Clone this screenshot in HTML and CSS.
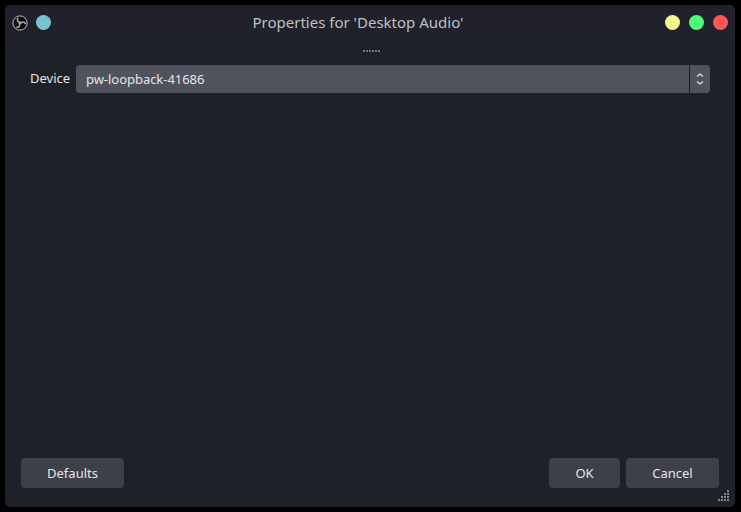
FILE: index.html
```html
<!DOCTYPE html>
<html lang="en">
<head>
<meta charset="utf-8">
<title>Properties for 'Desktop Audio'</title>
<link rel="stylesheet" href="styles.css">
</head>
<body>
<main class="window">
  <header class="titlebar">
    <div class="controls left">
      <svg class="logo" viewBox="0 0 16 16" fill="none">
        <circle cx="8" cy="8" r="7.1" fill="#08080a" stroke="#bcbcbc" stroke-width="1"/>
        <g stroke="#b4b4b0" stroke-width="1.5" stroke-linecap="round">
          <path d="M8.2 7.3C5.8 7 4.700 5.400 5.800 3.200"/>
          <path d="M8.2 7.3C5.8 7 4.700 5.400 5.800 3.200" transform="rotate(120 8 8)"/>
          <path d="M8.2 7.3C5.8 7 4.700 5.400 5.800 3.200" transform="rotate(240 8 8)"/>
        </g>
      </svg>
      <span class="dot blue"></span>
    </div>
    <h1 class="title">Properties for 'Desktop Audio'</h1>
    <div class="controls right">
      <span class="dot yellow"></span>
      <span class="dot green"></span>
      <span class="dot red"></span>
    </div>
  </header>
  <svg class="splitter" viewBox="0 0 18 2"><path d="M0 1h17" stroke="#73757c" stroke-width="2" stroke-dasharray="2 1"/></svg>
  <section class="form">
    <label class="label">Device</label>
    <div class="select">
      <span class="value">pw-loopback-41686</span>
      <span class="arrows">
        <svg width="8" height="14" viewBox="0 0 8 14" fill="none" stroke="#e6e7e9" stroke-width="1.2"><path d="M1 4.500l3-2.500 3 2.500M1 9.500l3 2.500 3-2.500"/></svg>
      </span>
    </div>
  </section>
  <footer class="footer">
    <button class="btn defaults">Defaults</button>
    <button class="btn ok">OK</button>
    <button class="btn cancel">Cancel</button>
  </footer>
  <svg class="grip" viewBox="0 0 11 11" stroke="#85868b" stroke-width="2" stroke-dasharray="2 1"><path d="M9 1h2M6 4h5M3 7h8M0 10h11"/></svg>
</main>
</body>
</html>
```
FILE: styles.css
```css
* { box-sizing: border-box; }

body {
  margin: 0;
  height: 512px;
  padding: 5px 6px 5px 5px;
  overflow: hidden;
  background: #000;
  color: #e4e5e7;
  font: 13px/18px "Noto Sans", sans-serif;
}

.window {
  position: relative;
  display: flex;
  flex-direction: column;
  height: 502px;
  border-radius: 5px;
  background: #1f2129;
  overflow: hidden;
}

.titlebar {
  display: grid;
  grid-template-columns: 60px 1fr 76px;
  align-items: center;
  height: 35px;
  padding: 0 7px;
  background: #20212a;
}

.controls { display: flex; align-items: center; }
.left { gap: 8px; }
.right { gap: 9px; justify-content: flex-end; }
.logo { width: 16px; height: 16px; }
.dot { width: 15px; height: 15px; border-radius: 50%; }
.blue { background: #78c2d1; }
.yellow { background: #f1f98c; }
.green { background: #50fa7b; }
.red { background: #ff5555; }

.title {
  margin: 0;
  padding: 0 8px 2px 0;
  color: #bfc0c5;
  font-size: 15px;
  font-weight: 400;
  line-height: 20px;
  text-align: center;
  white-space: nowrap;
}

.splitter {
  width: 18px;
  height: 2px;
  margin: 10px 0 0 358px;
}

.form {
  display: flex;
  align-items: center;
  margin: 13px 25px 0;
}

.label { width: 46px; padding-bottom: 2px; }

.select {
  display: flex;
  flex: 1;
  height: 28px;
  border-radius: 4px;
  background: #50535d;
  overflow: hidden;
}

.value { flex: 1; padding: 5px 10px; letter-spacing: -0.04px; }

.arrows {
  display: flex;
  align-items: center;
  justify-content: center;
  width: 21px;
  border-left: 1px solid #1f2129;
}

.footer {
  display: flex;
  gap: 6px;
  margin: auto 16px 19px;
}

.btn {
  height: 30px;
  padding: 0;
  border: 0;
  border-radius: 4px;
  background: #3d4049;
  color: inherit;
  font: inherit;
}

.defaults { width: 103px; margin-right: auto; }
.ok { width: 71px; }
.cancel { width: 93px; }

.grip {
  position: absolute;
  right: 6px;
  bottom: 6px;
  width: 11px;
  height: 11px;
}
```
